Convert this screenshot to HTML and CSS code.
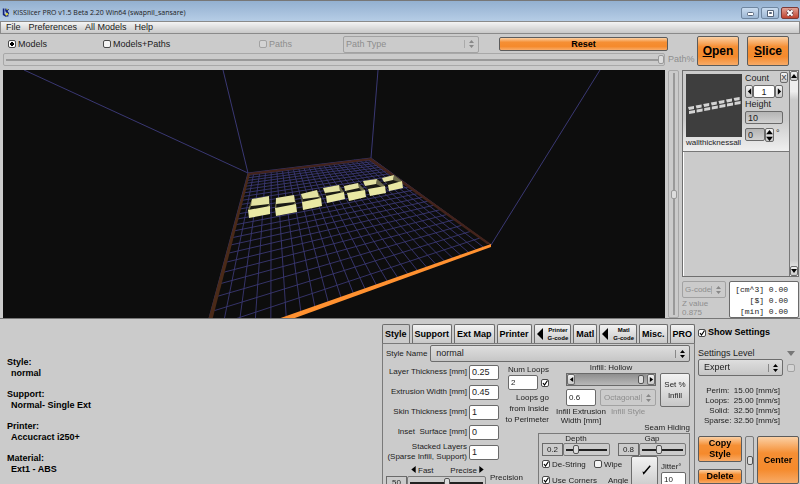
FILE: index.html
```
<!DOCTYPE html>
<html lang="en">
<head>
  <meta charset="utf-8">
  <title>KISSlicer PRO</title>
  <link rel="stylesheet" href="styles.css">
</head>
<body>
  <header class="titlebar">
    <svg class="logo" viewBox="0 0 10 12">
      <path d="M1 1h2v8H1zM3 8l2 2 3-1v2H4L1 9z" fill="#12207a"/>
      <path d="M4 1l5 1-2 2 2 3-2 3-3 1V9l2-2-2-3z" fill="#12207a"/>
      <path d="M5 1l3 1-2 1zM6 6l2 2-2 2-2-1z" fill="#e8e23c"/>
    </svg>
    <h1>KISSlicer PRO v1.5 Beta 2.20 Win64 (swapnil_sansare)</h1>
    <div class="window-buttons">
      <button aria-label="Minimize"><svg viewBox="0 0 16 10"><rect x="5.500" y="4.500" width="6" height="3" rx="1" fill="#fff" stroke="#56657a"/></svg></button>
      <button aria-label="Maximize"><svg viewBox="0 0 16 10"><path d="M5.500 2.500h6v6h-6z" fill="#fff" stroke="#56657a"/><path d="M7.500 4.500h2v1h-2z" fill="none" stroke="#56657a"/></svg></button>
      <button class="close" aria-label="Close"><svg viewBox="0 0 16 10"><path d="M5.500 2.500l5 5M10.500 2.500l-5 5" stroke="#5b3a44" stroke-width="3.500"/><path d="M5.500 2.500l5 5M10.500 2.500l-5 5" stroke="#fff" stroke-width="2"/></svg></button>
    </div>
  </header>
  <nav class="menubar">
    <a href="#">File</a>
    <a href="#">Preferences</a>
    <a href="#">All Models</a>
    <a href="#">Help</a>
  </nav>

  <section class="toolbar">
    <div class="toolbar-main">
      <div class="view-row">
        <label class="view-models"><input type="radio" name="view" checked>Models</label>
        <label class="view-both"><input type="checkbox">Models+Paths</label>
        <label class="view-paths off"><input type="checkbox" disabled>Paths</label>
        <select class="path-type" aria-label="Path Type" disabled><option>Path Type</option></select>
        <button class="orange reset">Reset</button>
      </div>
      <div class="path-row">
        <input class="path-slider" id="path" type="range" value="100" disabled>
        <label class="off" for="path">Path%</label>
      </div>
    </div>
    <div class="toolbar-actions">
      <button class="orange"><u>O</u>pen</button>
      <button class="orange"><u>S</u>lice</button>
    </div>
  </section>

  <section class="stage">
    <svg class="bed" id="bed" viewBox="0 0 662 248" preserveAspectRatio="xMidYMid slice"></svg>
    <input class="z-slider" type="range" aria-label="Z" value="50" disabled>
    <aside class="side">
      <div class="models">
        <div class="model">
          <div class="model-pic">
            <svg class="thumb" id="thumb" viewBox="0 0 56 63" preserveAspectRatio="none"></svg>
            <span>wallthicknessall</span>
          </div>
          <div class="model-form">
            <label for="count">Count</label>
            <div class="spin">
              <button class="step" aria-label="Less"><svg viewBox="0 0 6 8"><path d="M5 0v8L1 4z"/></svg></button>
              <input id="count" value="1">
              <button class="step" aria-label="More"><svg viewBox="0 0 6 8"><path d="M1 0v8l4-4z"/></svg></button>
            </div>
            <label for="height">Height</label>
            <input class="sunk" id="height" value="10">
            <div class="angle">
              <input class="sunk" aria-label="Rotation" value="0">
              <button class="updown" aria-label="Step"><svg viewBox="0 0 8 13"><path d="M4 0l4 5H0zM4 13l4-5H0z"/></svg></button>
              <span>°</span>
            </div>
          </div>
          <button class="remove" aria-label="Remove">X</button>
        </div>
        <div class="scroll">
          <button aria-label="Up"><svg viewBox="0 0 6 6"><path d="M3 1l3 4H0z"/></svg></button>
          <button aria-label="Down"><svg viewBox="0 0 6 6"><path d="M3 5l3-4H0z"/></svg></button>
        </div>
      </div>
      <div class="output">
        <div class="gcode off">
          <select aria-label="G-code" disabled><option>G-code</option></select>
          <span>Z value</span>
          <span>0.875</span>
        </div>
        <pre class="totals">[cm^3] 0.00
[$] 0.00
[min] 0.00</pre>
      </div>
    </aside>
  </section>

  <main class="bottom">
    <dl class="summary">
      <dt>Style:</dt><dd>normal</dd>
      <dt>Support:</dt><dd>Normal- Single Ext</dd>
      <dt>Printer:</dt><dd>Accucract i250+</dd>
      <dt>Material:</dt><dd>Ext1 - ABS</dd>
    </dl>

    <section class="settings">
      <div class="tabs">
        <button class="active">Style</button>
        <button>Support</button>
        <button>Ext Map</button>
        <button>Printer</button>
        <button class="sub"><svg viewBox="0 0 6 12"><path d="M6 0v12L0 6z"/></svg><span>Printer<br>G-code</span></button>
        <button>Matl</button>
        <button class="sub"><svg viewBox="0 0 6 12"><path d="M6 0v12L0 6z"/></svg><span>Matl<br>G-code</span></button>
        <button>Misc.</button>
        <button>PRO</button>
      </div>
      <div class="panel">
        <div class="name-row">
          <label for="style">Style Name</label>
          <select id="style"><option>normal</option></select>
        </div>
        <div class="panel-body">
          <div class="sizes">
            <div class="size"><label for="layer">Layer Thickness [mm]</label><input id="layer" value="0.25"></div>
            <div class="size"><label for="extrusion">Extrusion Width [mm]</label><input id="extrusion" value="0.45"></div>
            <div class="size"><label for="skin">Skin Thickness [mm]</label><input id="skin" value="1" autofocus></div>
            <div class="size"><label for="inset">Inset&nbsp; Surface [mm]</label><input id="inset" value="0"></div>
            <div class="size"><label for="stacked">Stacked Layers<br>(Sparse Infill, Support)</label><input id="stacked" value="1"></div>
            <div class="precision">
              <div class="precision-set">
                <div class="ends">
                  <span><svg viewBox="0 0 5 8"><path d="M5 0v8L0 4z"/></svg>Fast</span>
                  <span>Precise<svg viewBox="0 0 5 8"><path d="M0 0v8l5-4z"/></svg></span>
                </div>
                <div class="value-slider">
                  <output>50</output>
                  <input id="precision" type="range" value="50">
                </div>
              </div>
              <label for="precision">Precision</label>
            </div>
          </div>

          <div class="options">
            <div class="options-top">
              <div class="loops">
                <label for="loops">Num Loops</label>
                <div class="loops-row">
                  <input id="loops" value="2">
                  <input type="checkbox" aria-label="Loops go from inside to perimeter" checked>
                </div>
                <p>Loops go<br>from Inside<br>to Perimeter</p>
              </div>
              <div class="infill">
                <label class="infill-title" for="infill">Infill: Hollow</label>
                <div class="infill-bar">
                  <button class="step" aria-label="Less"><svg viewBox="0 0 6 8"><path d="M5 1v6L1 4z"/></svg></button>
                  <input id="infill" type="range" value="96">
                  <button class="step" aria-label="More"><svg viewBox="0 0 6 8"><path d="M1 1v6l4-3z"/></svg></button>
                </div>
                <button class="set">Set %<br>Infill</button>
                <div class="infill-width">
                  <input id="infill-width" value="0.6">
                  <label for="infill-width">Infill Extrusion<br>Width [mm]</label>
                </div>
                <div class="infill-style off">
                  <select id="infill-style" disabled><option>Octagonal</option></select>
                  <label for="infill-style">Infill Style</label>
                </div>
              </div>
            </div>
            <h2>Seam Hiding</h2>
            <div class="seam">
              <div class="seam-sliders">
                <div>
                  <label for="depth">Depth</label>
                  <div class="value-slider"><output>0.2</output><input id="depth" type="range" value="22"></div>
                </div>
                <div>
                  <label for="gap">Gap</label>
                  <div class="value-slider"><output>0.8</output><input id="gap" type="range" value="42"></div>
                </div>
              </div>
              <div class="seam-more">
                <div class="seam-checks">
                  <label><input type="checkbox" checked>De-String</label>
                  <label><input type="checkbox">Wipe</label>
                  <label><input type="checkbox" checked>Use Corners</label>
                  <span class="angle-label">Angle</span>
                </div>
                <button class="dial" aria-label="Angle"><svg viewBox="0 0 24 24"><path d="M11 13l6-7 1 1-5 6zM10 12l3 1-2 2z"/></svg></button>
                <div class="jitter">
                  <label for="jitter">Jitter°</label>
                  <input id="jitter" value="10">
                </div>
              </div>
            </div>
          </div>
        </div>
      </div>
    </section>

    <aside class="actions">
      <label class="show"><input type="checkbox" checked>Show Settings</label>
      <div class="level">
        <label for="level">Settings Level</label>
        <svg viewBox="0 0 8 5"><path d="M0 0h8L4 5z"/></svg>
        <select id="level"><option>Expert</option></select>
        <input type="checkbox" aria-label="Lock level" disabled>
      </div>
      <div class="speeds">
        <div>Perim:&nbsp; 15.00 [mm/s]</div>
        <div>Loops:&nbsp; 25.00 [mm/s]</div>
        <div>Solid:&nbsp; 32.50 [mm/s]</div>
        <div>Sparse: 32.50 [mm/s]</div>
      </div>
      <div class="big-buttons">
        <button class="orange">Copy<br>Style</button>
        <input class="zoom" type="range" aria-label="Zoom" value="50">
        <button class="orange center">Center</button>
        <button class="orange">Delete</button>
      </div>
    </aside>
  </main>
  <script src="bed.js"></script>
</body>
</html>
```

FILE: styles.css
```
* {
  box-sizing: border-box;
}
body {
  margin: 0;
  height: 100vh;
  overflow: hidden;
  display: flex;
  flex-direction: column;
  background: #cbcbcb;
  color: #1c1c1c;
  font-family: "Liberation Sans", sans-serif;
  font-size: 9px;
  line-height: 11px;
}
h1, h2, p, dl, dd, pre {
  margin: 0;
}
button, input, select {
  margin: 0;
  color: inherit;
  font: inherit;
}
button {
  padding: 0;
  border: 1px solid #6c6c6c;
  border-radius: 2px;
  background: linear-gradient(#f2f2f2, #c8c8c8);
}
label, span {
  white-space: nowrap;
}
.off {
  color: #8e8e8e;
}

/* form controls */
input:not([type]) {
  flex: none;
  min-width: 0;
  height: 15px;
  padding: 0 2px;
  border: 1px solid #6a6a6a;
  border-radius: 2px;
  background: #ffffff;
  outline-style: none;
}
input.sunk:not([type]) {
  height: 13px;
  background: linear-gradient(#b4b4b4, #d0d0d0);
}
input[type=checkbox], input[type=radio] {
  appearance: none;
  flex: none;
  width: 8px;
  height: 8px;
  border: 1px solid #4a4a4a;
  border-radius: 2px;
  background: #f4f4f4;
}
input[type=checkbox]:checked {
  background: #ffffff url("data:image/svg+xml,%3Csvg xmlns='http://www.w3.org/2000/svg' viewBox='0 0 6 6'%3E%3Cpath d='M1 3l1.500 2L5.500 0.500' fill='none' stroke='%23000' stroke-width='1.200'/%3E%3C/svg%3E") center / 6px no-repeat;
}
input[type=radio]:checked {
  background: radial-gradient(circle, #000000 2px, #ffffff 2px);
}
input[type=checkbox]:disabled {
  border-color: #a2a2a2;
  background: #d4d4d4;
}
select {
  appearance: none;
  min-width: 0;
  height: 17px;
  padding: 0 14px 0 5px;
  border: 1px solid #6c6c6c;
  border-radius: 2px;
  background:
    url("data:image/svg+xml,%3Csvg xmlns='http://www.w3.org/2000/svg' viewBox='0 0 14 8'%3E%3Cpath d='M7.500 0l2.500 3h-5zM7.500 8l2.500-3h-5z'/%3E%3Cpath d='M0.500 0v8' stroke='%23888'/%3E%3C/svg%3E") right center / 14px 8px no-repeat,
    linear-gradient(#dedede, #c6c6c6);
}
select:disabled {
  color: #8e8e8e;
  opacity: 1;
  border-color: #a2a2a2;
  background:
    url("data:image/svg+xml,%3Csvg xmlns='http://www.w3.org/2000/svg' viewBox='0 0 14 8'%3E%3Cpath d='M7.500 0l2.500 3h-5zM7.500 8l2.500-3h-5z' fill='%23888'/%3E%3Cpath d='M0.500 0v8' stroke='%23aaa'/%3E%3C/svg%3E") right center / 14px 8px no-repeat,
    #cbcbcb;
}
input[type=range] {
  appearance: none;
  min-width: 0;
  height: 13px;
  border: 1px solid #7a7a7a;
  border-radius: 2px;
  background: linear-gradient(#222222, #222222) center / calc(100% - 4px) 2px no-repeat, #cbcbcb;
}
input[type=range]::-webkit-slider-thumb {
  appearance: none;
  width: 6px;
  height: 9px;
  border: 1px solid #555555;
  border-radius: 2px;
  background: #dddddd;
}
input[type=range]:disabled {
  border-color: #a8a8a8;
}
input[type=range]:disabled::-webkit-slider-thumb {
  border-color: #999999;
}
.orange {
  border-color: #5c5c5c;
  background: linear-gradient(#fbd0a4, #f58f34 35%, #f58a2c 70%, #f8ab68);
  color: #000000;
  font-weight: bold;
}
.step svg {
  display: block;
  width: 5px;
  height: 7px;
  margin: auto;
}

/* window frame */
.titlebar {
  display: flex;
  align-items: center;
  flex: none;
  height: 21px;
  padding: 3px 1px 0 2px;
  border-top: 1px solid #777777;
  background: linear-gradient(#93b0d0, #b6cde6);
}
.logo {
  width: 8px;
  height: 11px;
  margin-right: 3px;
}
.titlebar h1 {
  flex: 1;
  font-family: "Open Sans", sans-serif;
  font-size: 7px;
  font-weight: normal;
}
.window-buttons {
  display: flex;
  gap: 2px;
}
.window-buttons button {
  width: 18px;
  height: 12px;
  border-color: #6f86a0;
  background: linear-gradient(#cadcf0, #9cb6d3);
}
.window-buttons .close {
  border-color: #7c3a36;
  background: linear-gradient(#e2a194, #c0432f);
}
.window-buttons svg {
  display: block;
  width: 16px;
  height: 10px;
}
.menubar {
  display: flex;
  align-items: center;
  flex: none;
  gap: 8px;
  height: 13px;
  padding-left: 5px;
  border: 1px solid #8a8a8a;
  background: linear-gradient(#f4f4f4, #c8c8c8);
}
.menubar a {
  color: inherit;
  text-decoration: none;
}

/* toolbar */
.toolbar {
  display: flex;
  flex: none;
  height: 36px;
  padding: 2px 0 0 3px;
}
.toolbar-main {
  flex: 1;
}
.view-row {
  display: flex;
  align-items: center;
  height: 16px;
}
.view-row label {
  display: flex;
  align-items: center;
  gap: 2px;
}
.view-models {
  padding-left: 5px;
  width: 100px;
}
.view-both {
  width: 156px;
}
.view-paths {
  width: 84px;
}
.path-type {
  width: 136px;
  padding-left: 2px;
}
.reset {
  flex: 1;
  height: 14px;
  margin: 0 29px 0 20px;
}
.path-row {
  display: flex;
  align-items: center;
  gap: 3px;
  margin-top: 1px;
}
.path-row input.path-slider {
  flex: 1;
  background: linear-gradient(#999999, #999999) center / calc(100% - 4px) 2px no-repeat, #cbcbcb;
}
.path-row label {
  width: 29px;
}
.toolbar-actions {
  display: flex;
  gap: 8px;
  width: 103px;
}
.toolbar-actions button {
  width: 42px;
  height: 30px;
  font-size: 12px;
}

/* plate view and model list */
.stage {
  display: flex;
  flex: none;
  gap: 3px;
  padding: 0 1px 0 3px;
}
.bed {
  flex: 1;
  min-width: 0;
  height: 248px;
  background: #0d0d0d;
}
.z-slider[type=range] {
  writing-mode: vertical-lr;
  width: 11px;
  height: auto;
  background: linear-gradient(#999999, #999999) center / 2px calc(100% - 4px) no-repeat, #cbcbcb;
}
.z-slider::-webkit-slider-thumb {
  width: 8px;
  height: 8px;
}
.side {
  display: flex;
  flex-direction: column;
  gap: 4px;
  width: 117px;
}
.models {
  display: flex;
  flex: 1;
  border: 1px solid #6f6f6f;
  box-shadow: inset 1px 1px 0 #ffffff;
}
.model {
  display: flex;
  flex: 1;
  align-self: flex-start;
  height: 81px;
  padding: 3px 0 0 3px;
  border-bottom: 1px solid #777777;
  background: linear-gradient(#cbcbcb 60%, #efefef);
}
.model-pic {
  width: 56px;
  font-size: 8px;
}
.thumb {
  display: block;
  width: 56px;
  height: 63px;
  background: #3e3e3e;
}
.model-form {
  display: flex;
  flex-direction: column;
  flex: 1;
  gap: 1px;
  margin: -1px 0 0 3px;
}
.spin {
  display: flex;
  height: 13px;
}
.spin .step {
  width: 8px;
}
.spin input:not([type]) {
  width: 22px;
  height: 13px;
  text-align: center;
}
.model-form #height {
  width: 38px;
}
.angle {
  display: flex;
  margin-top: 3px;
}
.angle .sunk {
  width: 20px;
}
.angle span {
  padding-left: 2px;
}
.updown {
  width: 9px;
  height: 14px;
}
.updown svg {
  display: block;
  width: 7px;
  height: 11px;
}
.remove {
  align-self: flex-start;
  width: 8px;
  height: 11px;
  margin: -2px 1px 0 -8px;
  font-size: 8px;
  line-height: 9px;
}
.scroll {
  display: flex;
  flex-direction: column;
  justify-content: space-between;
  width: 9px;
  border-left: 1px solid #777777;
  background: linear-gradient(#eeeeee 10%, #cbcbcb 14%, #cbcbcb 92%, #ffffff);
}
.scroll button {
  height: 10px;
}
.scroll svg {
  display: block;
  width: 6px;
  height: 6px;
}
.output {
  display: flex;
  justify-content: space-between;
  height: 37px;
}
.gcode {
  display: flex;
  flex-direction: column;
  font-size: 8px;
  line-height: 9px;
}
.gcode select {
  width: 44px;
  margin-bottom: 1px;
  padding: 0 10px 0 2px;
}
.totals {
  width: 70px;
  padding: 2px 10px 0 0;
  border: 1px solid #6a6a6a;
  border-radius: 2px;
  background: #ffffff;
  font-family: "Liberation Mono", monospace;
  font-size: 8px;
  line-height: 11px;
  text-align: right;
}

/* bottom half */
.bottom {
  display: flex;
  flex: 1;
  min-height: 0;
  padding-top: 5px;
  border-top: 1px solid #777777;
}
.summary {
  flex: 1;
  padding: 33px 0 0 7px;
  color: #000000;
  font-weight: bold;
}
.summary dd {
  padding-left: 4px;
  margin-bottom: 10px;
}
.settings {
  width: 313px;
  font-size: 8px;
}
.tabs {
  display: flex;
  gap: 2px;
  height: 19px;
}
.tabs button {
  flex: 1 1 auto;
  padding: 0 1px;
  border-bottom: 0 none;
  border-radius: 2px 2px 0 0;
  color: #000000;
  font-size: 9px;
  font-weight: bold;
  white-space: nowrap;
}
.tabs .active {
  background: #cbcbcb;
}
.tabs .sub {
  display: flex;
  align-items: center;
  justify-content: center;
  gap: 5px;
  font-size: 6px;
  line-height: 8px;
}
.tabs svg {
  width: 6px;
  height: 12px;
}
.panel {
  padding: 1px 4px 0 3px;
  border: 1px solid #7a7a7a;
  border-bottom: 0 none;
}
.name-row {
  display: flex;
  align-items: center;
  gap: 3px;
}
.name-row select {
  flex: 1;
  font-size: 9px;
}
.panel-body {
  display: flex;
}
.sizes {
  width: 113px;
}
.size {
  display: flex;
  align-items: center;
  justify-content: flex-end;
  gap: 2px;
  height: 20px;
  line-height: 10px;
  text-align: right;
}
.size input:not([type]) {
  width: 30px;
  font-size: 9px;
}
.precision {
  display: flex;
  align-items: center;
  gap: 4px;
  margin-top: 3px;
}
.precision-set {
  flex: none;
  width: 100px;
}
.ends {
  display: flex;
  justify-content: space-between;
  padding: 0 0 0 23px;
}
.ends svg {
  width: 5px;
  height: 7px;
  margin: 0 2px;
}
.value-slider {
  display: flex;
}
.value-slider output {
  width: 21px;
  height: 13px;
  border: 1px solid #6a6a6a;
  text-align: center;
}
.value-slider input {
  flex: 1;
}
.options {
  display: flex;
  flex-direction: column;
  flex: 1;
  align-items: flex-end;
}
.options-top {
  display: flex;
  justify-content: space-between;
  align-self: stretch;
  padding: 0 0 0 9px;
}
.loops {
  width: 41px;
  padding-top: 2px;
}
.loops-row {
  display: flex;
  align-items: center;
  gap: 3px;
}
.loops-row input:not([type]) {
  width: 30px;
}
.loops p {
  display: flex;
  justify-content: flex-end;
  margin-top: 2px;
  text-align: right;
  white-space: nowrap;
}
.infill {
  display: grid;
  grid-template-columns: 30px 56px 30px;
  grid-template-rows: 11px 13px auto;
  gap: 0 4px;
  text-align: center;
}
.infill-title, .infill-bar {
  grid-column: 1 / 3;
}
.infill-bar {
  display: flex;
  grid-row: 2;
  border: 1px solid #6a6a6a;
  background: #a6a6a6;
}
.infill-bar .step {
  width: 8px;
}
.infill-bar input[type=range] {
  flex: 1;
  height: 11px;
  border: 0 none;
  background: linear-gradient(#8e8e8e, #b8b8b8);
}
.set {
  grid-row: 2 / 4;
  grid-column: 3;
  height: 34px;
}
.infill-width, .infill-style {
  display: flex;
  flex-direction: column;
  align-items: center;
  grid-row: 3;
  gap: 1px;
  padding-top: 3px;
  line-height: 9px;
}
.infill-width input:not([type]) {
  width: 30px;
  height: 17px;
}
.infill-style select {
  width: 56px;
  padding-left: 3px;
}
h2 {
  margin-top: -3px;
  font-size: 8px;
  font-weight: normal;
}
.seam {
  width: 152px;
  padding: 0 3px;
  border: 1px solid #7a7a7a;
  border-bottom: 0 none;
}
.seam-sliders {
  display: flex;
  gap: 8px;
  text-align: center;
}
.seam-sliders > div {
  flex: 1;
  min-width: 0;
}
.seam-sliders label {
  display: block;
  line-height: 9px;
}
.seam-more {
  display: flex;
  gap: 3px;
}
.seam-checks {
  display: grid;
  grid-template-columns: 52px auto;
  grid-auto-rows: 16px;
  flex: 1;
  min-width: 0;
}
.seam-checks label {
  display: flex;
  align-items: center;
  gap: 2px;
}
.angle-label {
  padding: 3px 0 0 14px;
}
.dial {
  width: 27px;
  height: 34px;
}
.jitter {
  width: 25px;
  padding-top: 5px;
}
.jitter input:not([type]) {
  width: 25px;
}

/* right column */
.actions {
  width: 105px;
  padding: 3px 3px 0 3px;
}
.show {
  display: flex;
  align-items: center;
  gap: 2px;
  color: #000000;
  font-weight: bold;
}
.level {
  display: grid;
  grid-template-columns: 85px 8px;
  gap: 0 4px;
  align-items: center;
  margin-top: 10px;
}
.level svg {
  width: 8px;
  fill: #777777;
}
.speeds {
  margin: 10px 17px 10px 0;
  font-size: 8px;
  line-height: 10px;
  text-align: right;
}
.big-buttons {
  display: grid;
  grid-template-columns: 44px 9px 42px;
  grid-template-rows: 26px 15px;
  gap: 7px 3px;
}
.zoom[type=range] {
  writing-mode: vertical-lr;
  grid-row: 1 / 3;
  grid-column: 2;
  width: 9px;
  height: auto;
  background: #cbcbcb;
}
.zoom::-webkit-slider-thumb {
  width: 6px;
  height: 10px;
}
.center {
  grid-row: 1 / 3;
  grid-column: 3;
}
```

FILE: bed.js
```
const NS = "http://www.w3.org/2000/svg"
const CELLS = 25

// corners of the plate on screen: back left, back right, front right, front left
const plate = [[245, 103], [368, 88], [488, 175], [198, 278]]

// maps the unit square onto a quad in perspective
const makeProjection = function(q) {
  const [[x0, y0], [x1, y1], [x2, y2], [x3, y3]] = q
  const sx = x0 - x1 + x2 - x3, sy = y0 - y1 + y2 - y3
  const dx1 = x1 - x2, dx2 = x3 - x2, dy1 = y1 - y2, dy2 = y3 - y2
  const det = dx1 * dy2 - dx2 * dy1
  const g = (sx * dy2 - dx2 * sy) / det
  const h = (dx1 * sy - sx * dy1) / det
  return function(u, v) {
    const w = g * u + h * v + 1
    return [
      ((x1 - x0 + g * x1) * u + (x3 - x0 + h * x3) * v + x0) / w,
      ((y1 - y0 + g * y1) * u + (y3 - y0 + h * y3) * v + y0) / w
    ]
  }
}

const draw = function(svg, points, fill) {
  const e = document.createElementNS(NS, "polygon")
  e.setAttribute("points", points.map(p => p.join(",")).join(" "))
  e.setAttribute("fill", fill)
  svg.appendChild(e)
}

const line = function(svg, a, b, stroke, width) {
  const e = document.createElementNS(NS, "line")
  e.setAttribute("x1", a[0])
  e.setAttribute("y1", a[1])
  e.setAttribute("x2", b[0])
  e.setAttribute("y2", b[1])
  e.setAttribute("stroke", stroke)
  e.setAttribute("stroke-width", width)
  svg.appendChild(e)
}

const bed = document.getElementById("bed")
const project = makeProjection(plate)

for (let i = 0; i <= CELLS; i++) {
  const t = i / CELLS
  line(bed, project(t, 0), project(t, 1), "#3a3873", 0.9)
  line(bed, project(0, t), project(1, t), "#3a3873", 0.9)
}

// edges of the build volume
line(bed, [245, 103], [220, 0], "#3a3873", 1)
line(bed, [368, 88], [375, 0], "#3a3873", 1)
line(bed, [488, 175], [597, 0], "#3a3873", 1)
line(bed, [245, 103], [21, 0], "#3a3873", 1)

// rim of the plate
draw(bed, [[245, 103], [368, 88], [368, 90], [246, 105]], "#43231b")
draw(bed, [[368, 88], [488, 174], [484, 174], [366, 90]], "#43231b")
draw(bed, [[245, 103], [247, 104], [201, 282], [197, 280]], "#4a2a18")
draw(bed, [[488, 174], [488, 177], [198, 282], [198, 276]], "#ff9130")

// the seven boxes: front wall, then back wall, corners clockwise from top left
const boxes = [
  [[[245, 140], [267, 136], [267, 144], [246, 148]], [[249, 129], [266, 126], [266, 134], [248, 136]]],
  [[[272, 138], [293, 134], [294, 142], [273, 146]], [[273, 128], [291, 125], [292, 132], [273, 134]]],
  [[[299, 132], [318, 128], [319, 136], [300, 140]], [[298, 124], [314, 120], [316, 127], [300, 129]]],
  [[[323, 126], [341, 122], [342, 129], [324, 133]], [[320, 118], [336, 115], [337, 121], [322, 123]]],
  [[[344, 123], [362, 120], [363, 127], [346, 131]], [[341, 116], [355, 113], [356, 118], [342, 121]]],
  [[[365, 119], [382, 116], [383, 123], [367, 126]], [[360, 111], [374, 109], [373, 114], [362, 116]]],
  [[[385, 115], [399, 111], [400, 118], [386, 121]], [[379, 108], [391, 105], [390, 110], [381, 112]]]
]
boxes.forEach(function([front, back]) {
  const [ftl, ftr, , fbl] = front
  const [btl, btr, bbr] = back
  draw(bed, [ftl, btl, btr, ftr, fbl], "#1a1a15")
  draw(bed, [ftl, btl, [btl[0] + 1, btl[1] + 2], [ftl[0] + 1, ftl[1] + 1]], "#75744f")
  draw(bed, [btr, ftr, [ftr[0] - 3, ftr[1] + 1], bbr], "#6b6a4b")
  draw(bed, back, "#e3e2a2")
  draw(bed, front, "#e9e8a4")
})

const thumb = document.getElementById("thumb")
for (let i = 0; i < 7; i++) {
  const x = 2 + i * 7.6, y = 33 - i * 1.5
  draw(thumb, [[x, y], [x + 6, y - 1], [x + 6, y + 2], [x + 1, y + 3]], "#d4d4d4")
  draw(thumb, [[x + 1, y + 4], [x + 7, y + 3], [x + 7, y + 6], [x + 1, y + 7]], "#d4d4d4")
}
```
